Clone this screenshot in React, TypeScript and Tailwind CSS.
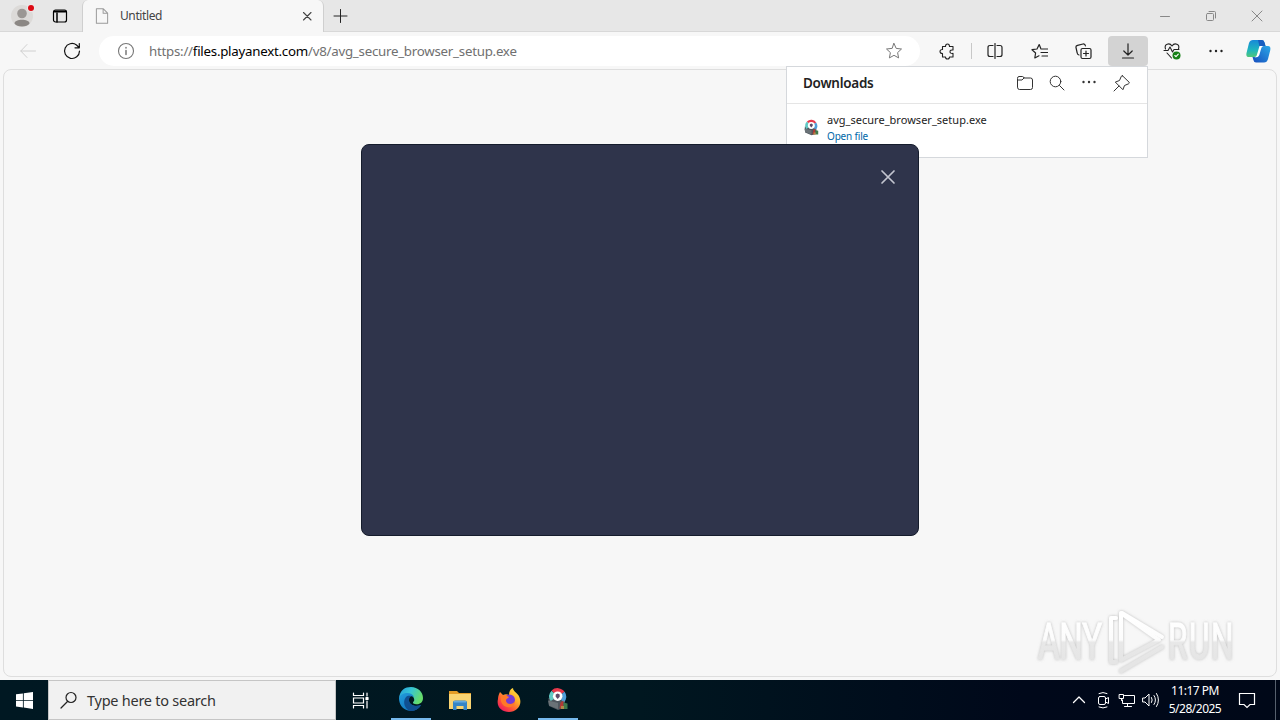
import type { ReactNode } from 'react';

interface IconProps {
  size?: number;
  className?: string;
  strokeWidth?: number;
  viewBox?: string;
  children: ReactNode;
}

function Icon({ size = 16, className = '', strokeWidth = 1, viewBox = '0 0 16 16', children }: IconProps) {
  return (
    <svg
      width={size}
      height={size}
      viewBox={viewBox}
      fill="none"
      stroke="currentColor"
      strokeWidth={strokeWidth}
      strokeLinecap="round"
      strokeLinejoin="round"
      className={`shrink-0 ${className}`}
    >
      {children}
    </svg>
  );
}

function AvgIcon({ size }: { size: number }) {
  return (
    <svg width={size} height={size} viewBox="0 0 24 24" className="shrink-0">
      <path d="M2.500 11L12 9l7 5-1 7-6 2-9-4z" fill="#50585f" />
      <path d="M2 13.500l10 2.500v6l-9-3.500z" fill="#6a7277" />
      <g fill="none" strokeWidth="4">
        <path d="M6.300 13A6.500 6.500 0 0 1 7 5" stroke="#62c9c4" />
        <path d="M7 5A6.500 6.500 0 0 1 17 6" stroke="#e8394c" />
        <path d="M17 6A6.500 6.500 0 0 1 16.500 14" stroke="#4f9fda" />
      </g>
      <circle cx="11.700" cy="9.200" r="4.800" fill="#fff" />
      <path d="M11.700 6.500l2 .9v2.300l-2 2.300-2-2.300V7.400z" fill="#5e4a68" />
      <path d="M14.500 15.500l3-2v8h-4z" fill="#b23a35" />
      <path d="M17.500 15.500l4 1V22h-4z" fill="#3f7a4b" />
      <path d="M15 19h3v3h-3z" fill="#b08a48" />
    </svg>
  );
}

function TabStrip() {
  return (
    <div className="flex h-8 w-full border-b border-[#d8d8d8] bg-[#e7e7e7]">
      <div className="flex w-[82px] items-center pl-[11px]">
        <svg width="26" height="26" viewBox="0 0 26 26">
          <circle cx="11" cy="13" r="11" fill="#dcdad8" />
          <circle cx="11" cy="10.500" r="4.800" fill="#9b9794" />
          <path d="M3.500 20.500c0-5 15-5 15 0-2 4-13 4-15 0z" fill="#8b8784" />
          <circle cx="20" cy="5" r="4" fill="#ece8e8" />
          <circle cx="20" cy="5" r="3" fill="#dc0a14" />
        </svg>
        <Icon className="ml-[15px] text-black" strokeWidth={1.2}>
          <rect x="1.500" y="2" width="13" height="12" rx="2" />
          <path d="M2.500 3.500h11" strokeWidth="2.200" />
          <path d="M5 5v9" strokeWidth="1.500" />
        </Icon>
      </div>
      <div className="-mb-px flex w-[242px] items-center rounded-t-md border-x border-[#cfcfcf] bg-[#f7f7f7] pl-[10px]">
        <Icon size={18} className="text-[#9b9b9b]" strokeWidth={0.9}>
          <path d="M3 1.500h6L13 5.500v9H3zM9 1.500v4h4" />
        </Icon>
        <span className="ml-[9px] w-[180px] text-[12px] leading-4 tracking-[-0.4px] text-[#444]">Untitled</span>
        <Icon size={14} className="text-[#444]" viewBox="0 0 14 14" strokeWidth={1.1}>
          <path d="M3.500 3.500l7.500 7.500M11 3.500L3.500 11" />
        </Icon>
      </div>
      <div className="flex w-[32px] items-center justify-center">
        <Icon className="text-[#222]">
          <path d="M8.500 1.500v13M2 8h13" />
        </Icon>
      </div>
      <div className="ml-auto flex h-8 items-center text-[#888]">
        <div className="flex w-[46px] justify-center">
          <Icon><path d="M3.500 8.500h9" /></Icon>
        </div>
        <div className="flex w-[46px] justify-center">
          <Icon>
            <rect x="3.500" y="5.500" width="7" height="7" rx="1" />
            <path d="M6 3.500h5.500q1 0 1 1V10" />
          </Icon>
        </div>
        <div className="flex w-[46px] justify-center">
          <Icon><path d="M3 3l10 10M13 3L3 13" /></Icon>
        </div>
      </div>
    </div>
  );
}

function Cell({ children }: { children: ReactNode }) {
  return <div className="flex h-[30px] w-[44px] items-center justify-center">{children}</div>;
}

function Toolbar() {
  return (
    <div className="flex h-[34px] items-end bg-[#f7f7f7] text-[#222]">
      <div className="flex h-[30px] w-[99px] items-center pl-5">
        <Icon className="text-[#d0d0d0]" viewBox="0 0 16 16">
          <path d="M15.500 8H.8M7 1.500L.8 8 7 14.500" />
        </Icon>
        <Icon size={18} className="ml-[27px] text-[#111]" viewBox="0 0 18 18" strokeWidth={1.2}>
          <path d="M16.500 9A7.500 7.500 0 1 1 13.500 3l2.500 2.500M16.300 1.500v4.300h-4.300" />
        </Icon>
      </div>
      <div className="flex h-[30px] w-[821px] items-center rounded-full bg-white pl-[18px]">
        <Icon size={18} className="text-[#777]" viewBox="0 0 18 18" strokeWidth={1.1}>
          <circle cx="9" cy="9" r="7.500" />
          <path d="M9 8.500v4M9 5.500v.5" strokeWidth="1.500" />
        </Icon>
        <span className="ml-[14px] w-[736px] pt-px text-[13.300px] tracking-[-0.25px] whitespace-nowrap text-[#707070]">
          https://<span className="text-black">files.playanext.com</span>/v8/avg_secure_browser_setup.exe
        </span>
        <Icon size={18} className="text-[#777]" viewBox="0 0 18 18">
          <path d="M9 1.500l2.200 4.900 5.300.6-3.900 3.600 1 5.300L9 13.300l-4.600 2.600 1-5.300L1.500 7l5.300-.6z" />
        </Icon>
      </div>
      <div className="ml-[5px] flex">
        <Cell>
          <Icon strokeWidth={1.1} size={17} viewBox="0 0 17 17">
            <path d="M3.500 3.500H6.500Q6.500 1 8.500 1t2 2.500H14v3.500q-3-.3-3 1.700t3 1.700V14h-3.500Q10.500 16 8.500 16t-2-2H3.500v-3.500Q1 10.500 1 8.500t2.500-2z" />
          </Icon>
        </Cell>
        <div className="mr-px ml-[2px] h-4 w-px shrink-0 self-center bg-[#c8c8c8]" />
        <Cell>
          <Icon strokeWidth={1.2}>
            <path d="M8 .5v15M6 2.500H3q-2 0-2 2v7q0 2 2 2h3M10 2.500h3q2 0 2 2v7q0 2-2 2h-3" />
          </Icon>
        </Cell>
        <Cell>
          <Icon size={17} strokeWidth={1.2} viewBox="0 0 17 17">
            <path d="M10 6L8.200 1.500 6 6l-5 .7L4.600 10l-.8 5 4.200-2.200M11 6h5.500M10 9.500h6.500M11 13h5.500" />
          </Icon>
        </Cell>
        <Cell>
          <Icon size={17} strokeWidth={1.2} viewBox="0 0 17 17">
            <path d="M4 12Q2.500 11.800 2.200 10L1 4.500Q.6 2.800 2.500 2.300L8 1q2-.4 2.500 2" />
            <rect x="6" y="5.500" width="10" height="10" rx="1.500" />
            <path d="M11 8v5M8.500 10.500h5" />
          </Icon>
        </Cell>
        <div className="ml-px flex h-[30px] w-[44px] items-center justify-center">
          <div className="flex h-[30px] w-10 shrink-0 items-center justify-center rounded bg-[#d3d3d3]">
            <Icon strokeWidth={1.2} viewBox="0 0 16 16">
              <path d="M8 .8v11.200M3.800 8L8 12l4.200-4M2.500 15h11" />
            </Icon>
          </div>
        </div>
        <Cell>
          <Icon size={18} strokeWidth={1.1} viewBox="0 0 18 18">
            <path d="M2.500 7C.8 2 6.500.3 9 4c2.500-3.700 8.200-2 6.500 3M1 8.500h4l2-3.500 2.500 5L11 7.500h5M4 11l4.500 5" />
            <circle cx="13.500" cy="13.500" r="4" fill="#168016" stroke="none" />
            <path d="M11.800 13.500l1.200 1.200 2.300-2.500" stroke="#fff" />
          </Icon>
        </Cell>
        <Cell>
          <Icon>
            <g fill="currentColor" stroke="none">
              <circle cx="2.500" cy="8" r="1.200" />
              <circle cx="8" cy="8" r="1.200" />
              <circle cx="13.500" cy="8" r="1.200" />
            </g>
          </Icon>
        </Cell>
        <div className="flex w-[40px] items-center justify-center">
          <svg width="25" height="24" viewBox="0 0 25 24">
            <defs>
              <linearGradient id="copilotLeft" x1="0" y1="0" x2="0" y2="1">
                <stop stopColor="#1788d8" />
                <stop offset=".6" stopColor="#1fb6bd" />
                <stop offset="1" stopColor="#50c77a" />
              </linearGradient>
              <linearGradient id="copilotRight" x1="1" y1="0" x2="0" y2="1">
                <stop stopColor="#2aa8e8" />
                <stop offset="1" stopColor="#174dbd" />
              </linearGradient>
            </defs>
            <path d="M7 1h9q2 0 2.700 3l.8 3h-3q-2 0-2.600 2L12 15q-1 3-4 3H3Q-.3 18 .5 14L3 4Q4 1 7 1z" fill="url(#copilotLeft)" />
            <path d="M12 1h4q2 0 2.700 3l.8 3h-3q-2 0-2.600 2z" fill="#175dc0" />
            <path d="M17 7h5q3 0 2.300 4L22 20q-1 3.500-4 3.500H10q-2 0-2.600-2.500L6.500 18H9q2.500 0 3.200-2l2-7q.6-2 2.800-2z" fill="url(#copilotRight)" />
            <path d="M13.500 7h4q-1.800.3-2.300 2.500l-1.900 6.500q-.8 2.500-4.800 2.500 1.700-.5 2.200-2z" fill="#fff" />
          </svg>
        </div>
      </div>
    </div>
  );
}

function DownloadsPanel() {
  return (
    <div className="absolute top-[66px] left-[786px] h-[92px] w-[362px] border border-[#d5d8dc] bg-white">
      <div className="flex h-[37px] items-center border-b border-[#e5e5e5] pl-4 text-[#333]">
        <h2 className="w-[214px] pb-1 text-[13.500px] font-semibold tracking-[-0.27px] text-[#222]">Downloads</h2>
        <div className="flex gap-4 pb-[4px]">
          <Icon size={16}>
            <path d="M.5 3Q.5 1.500 2 1.500h3.500q1 0 1.500 1.500h6.500q2 0 2 2v7.500q0 2-2 2h-11q-2 0-2-2zM.5 5H5l2-2" />
          </Icon>
          <Icon size={16}>
            <circle cx="6.500" cy="6.500" r="5.300" />
            <path d="M10.500 10.500l4.500 4.500" />
          </Icon>
          <Icon size={16}>
            <g fill="currentColor" stroke="none">
              <circle cx="2.500" cy="7" r="1.200" />
              <circle cx="8" cy="7" r="1.200" />
              <circle cx="13.500" cy="7" r="1.200" />
            </g>
          </Icon>
          <Icon size={17} viewBox="0 0 17 17">
            <path d="M9.500.8l6.700 6.500q.3 1-.7 1.500l-4 1.700-1.600 4.200-7.600-7.600 4.200-1.600L8.300 1.300q.5-.8 1.200-.5zM6 11L1 16" />
          </Icon>
        </div>
      </div>
      <div className="flex items-center pt-[7px] pl-4">
        <AvgIcon size={17} />
        <div className="ml-[7px] flex flex-col">
          <span className="text-[11px] leading-[18px] tracking-[0.02px] text-[#222]">avg_secure_browser_setup.exe</span>
          <a className="text-[10px] leading-[14px] tracking-[-0.17px] text-[#0067a8]">Open file</a>
        </div>
      </div>
    </div>
  );
}

function InstallerDialog() {
  return (
    <div className="absolute top-[144px] left-[361px] flex h-[392px] w-[558px] justify-end rounded-lg border border-[#151c2c] bg-[#2f344b] pt-6 pr-[22px]">
      <Icon className="text-[#c3c5d0]" strokeWidth={1.7}>
        <path d="M2 2l12 12M14 2L2 14" />
      </Icon>
    </div>
  );
}

function Watermark() {
  return (
    <svg className="absolute top-[604px] left-[1034px]" width="240" height="76" viewBox="0 0 240 76">
      <defs>
        <linearGradient id="markFade" x1="0" y1="14" x2="0" y2="58" gradientUnits="userSpaceOnUse">
          <stop stopColor="#fff" />
          <stop offset=".5" stopColor="#fcfcfc" />
          <stop offset=".55" stopColor="#e8e8e8" />
          <stop offset="1" stopColor="#e5e5e5" />
        </linearGradient>
        <linearGradient id="wordFade" x1="0" y1="-41" x2="0" y2="3" gradientUnits="userSpaceOnUse">
          <stop stopColor="#fff" />
          <stop offset=".5" stopColor="#fcfcfc" />
          <stop offset=".55" stopColor="#e8e8e8" />
          <stop offset="1" stopColor="#e5e5e5" />
        </linearGradient>
        <filter id="markShadow" x="-20%" y="-20%" width="140%" height="140%">
          <feDropShadow dx="0" dy="0" stdDeviation="1.500" floodColor="#888" floodOpacity=".55" />
        </filter>
      </defs>
      <g filter="url(#markShadow)" fontFamily="Roboto, Liberation Sans, sans-serif" fontSize="50">
        <text transform="translate(4 55) scale(.66 1)" textLength="97" fill="url(#wordFade)" stroke="url(#wordFade)">ANY</text>
        <text transform="translate(134 55) scale(.63 1)" textLength="104" fill="url(#wordFade)" stroke="url(#wordFade)">RUN</text>
        <g fill="none" stroke="url(#markFade)" strokeWidth="4" strokeLinejoin="round" strokeLinecap="round">
          <path d="M82 14h-5v44h5" />
          <path d="M87 9v47l38-20z" />
          <path d="M88 9l40 24M87 67l41-24" />
        </g>
      </g>
    </svg>
  );
}

function EdgeLogo() {
  return (
    <svg width="26" height="26" viewBox="0 0 26 26">
      <defs>
        <linearGradient id="edgeGreen" x1="0" y1="0" x2="1" y2=".4">
          <stop stopColor="#249bda" />
          <stop offset=".5" stopColor="#36c5d5" />
          <stop offset="1" stopColor="#66dc6b" />
        </linearGradient>
        <linearGradient id="edgeBlue" x1="0" y1="0" x2="1" y2="1">
          <stop stopColor="#229ddd" />
          <stop offset="1" stopColor="#0b65b1" />
        </linearGradient>
      </defs>
      <path d="M1 12C2 4 7 1 13 1c7 0 12 5 12 11 0 5-4 7-8 6-3-.5-2-2-1-3 1-2-1-6-5-6-5 0-8 2-10 3z" fill="url(#edgeGreen)" />
      <path d="M1 12c2-6 13-7 15-1-4-2-6 1-5 4 1 5 8 6 12 4-3 5-8 7-13 5.500C4 23 1 18 1 12z" fill="url(#edgeBlue)" />
      <path d="M8 11c-4 5-1 12 4 14 5 0 9-2 11-6-6 2-12 0-12-5 0-2 1-3 2-4-2-.5-4 0-5 1z" fill="#104f91" />
    </svg>
  );
}

function FolderLogo() {
  return (
    <svg width="24" height="24" viewBox="0 0 24 24">
      <path d="M1 3h8l2 2h12v4H1z" fill="#e39c26" />
      <path d="M1 6h22v15H1z" fill="#f9d472" />
      <path d="M5 14.500q0-2 2-2h10q2 0 2 2V22h-3.500v-4h-7v4H5z" fill="#3685c6" />
      <path d="M6 13h12v1.500H6z" fill="#66abdf" />
    </svg>
  );
}

function FirefoxLogo() {
  return (
    <svg width="24" height="26" viewBox="0 0 24 26">
      <defs>
        <linearGradient id="foxFire" x1="1" y1="0" x2=".2" y2="1">
          <stop stopColor="#fff24a" />
          <stop offset=".4" stopColor="#ffb02a" />
          <stop offset=".7" stopColor="#ff5836" />
          <stop offset="1" stopColor="#ed1661" />
        </linearGradient>
      </defs>
      <path d="M3 5l3 3c2-1 4-1 6 0 0-3 1-6 4-7 0 4 6 5 7 11 2 7-4 13-11 13S-1 20 1 12c0-3 1-5 2-7z" fill="url(#foxFire)" />
      <circle cx="12.500" cy="13" r="5.500" fill="#763bd4" />
      <path d="M4 9c5-2 6 0 8 1-1 2-3 1-3 4 1 4 7 4 9 0 0 5-4 7-8 6-5-1-7-6-6-11z" fill="#ff7928" />
    </svg>
  );
}

function Taskbar() {
  return (
    <div className="flex h-10 w-full bg-[linear-gradient(90deg,#001822_0%,#001720_50%,#00081a_80%,#000818_100%)] text-white">
      <div className="flex w-12 items-center justify-center">
        <svg width="17" height="17" viewBox="0 0 16 16" fill="#fff">
          <path d="M0 2.200l6.500-.9v6.200H0zM7.300 1.200L16 0v7.500H7.300zM0 8.300h6.500v6.200L0 13.700zM7.300 8.300H16V16l-8.700-1.300z" />
        </svg>
      </div>
      <div className="flex w-[288px] items-center border border-[#c5c5c5] bg-[#f1f1f1] pl-[11px] text-[#222]">
        <Icon size={18} viewBox="0 0 18 18" strokeWidth={1.2}>
          <circle cx="11" cy="6.500" r="5" />
          <path d="M7.500 10.500L1 17" />
        </Icon>
        <span className="ml-[9px] pt-px text-[14.500px] tracking-[-0.25px] text-[#333]">Type here to search</span>
      </div>
      <div className="flex w-[48px] items-center justify-center">
        <Icon size={17} viewBox="0 0 17 17" strokeWidth={1.2}>
          <path d="M1.500 1v2.500h10V1M1.500 16v-2.500h10V16M1.500 6h10v5h-10zM15 1v3M15 9v7" strokeLinejoin="miter" />
          <path d="M14 5.500h2v2h-2z" fill="#fff" />
        </Icon>
      </div>
      <div className="flex">
        <div className="mr-1 ml-[7px] flex w-10 items-center justify-center border-b-2 border-[#76b9ed]"><EdgeLogo /></div>
        <div className="flex w-[49px] items-center justify-center"><FolderLogo /></div>
        <div className="flex w-[49px] items-center justify-center"><FirefoxLogo /></div>
        <div className="ml-[5px] flex w-10 items-center justify-center border-b-2 border-[#76b9ed]"><AvgIcon size={24} /></div>
      </div>
      <div className="ml-auto flex items-center">
        <Icon size={14} viewBox="0 0 14 14" strokeWidth={1.3}><path d="M1.500 9.500L7 4l5.500 5.500" /></Icon>
        <Icon size={18} className="ml-[8px]" viewBox="0 0 18 18">
          <rect x="4.500" y="5.500" width="7" height="8" rx="1.500" />
          <path d="M11.500 8l3-1.500v6l-3-1.500M5 2.500q4-2 8 0M5 16q4 2 8 0" />
        </Icon>
        <Icon size={18} className="ml-[6px]" viewBox="0 0 18 18">
          <path d="M6.500 4.500h10v8h-12V9M9.500 12.500v3M6.500 15.500h7M1.500 3.500h4v4h-4zM3.500 7.500v2" strokeLinejoin="miter" />
        </Icon>
        <Icon size={18} className="ml-[6px]" viewBox="0 0 18 18">
          <path d="M1 7h2l4-4v12l-4-4H1zM9.500 6.500q1.500 2.500 0 5M12 4.500q3 4.500 0 9M14.500 2.500q4 6.500 0 13" />
        </Icon>
        <div className="ml-[6px] flex w-[58px] flex-col items-center text-[12px] leading-[18px] tracking-[-0.5px] whitespace-nowrap">
          <span>11:17 PM</span>
          <span>5/28/2025</span>
        </div>
        <Icon size={18} className="ml-[14px]" viewBox="0 0 18 18" strokeWidth={1.2}>
          <path d="M1.500 2.500h15v11H12l-3 3-3-3H1.500z" strokeLinejoin="miter" />
        </Icon>
        <div className="ml-[19px] h-10 w-[5px] border-l border-[#56606d]" />
      </div>
    </div>
  );
}

export default function App() {
  return (
    <div className="relative flex h-[720px] w-[1280px] flex-col overflow-hidden bg-[#f7f7f7] font-['Noto_Sans','Open_Sans',sans-serif]">
      <TabStrip />
      <Toolbar />
      <main className="mx-[3px] mt-[3px] mb-[3px] flex-1 rounded-lg border border-[#dedede] bg-[#f7f7f7]" />
      <Taskbar />
      <DownloadsPanel />
      <InstallerDialog />
      <Watermark />
    </div>
  );
}
